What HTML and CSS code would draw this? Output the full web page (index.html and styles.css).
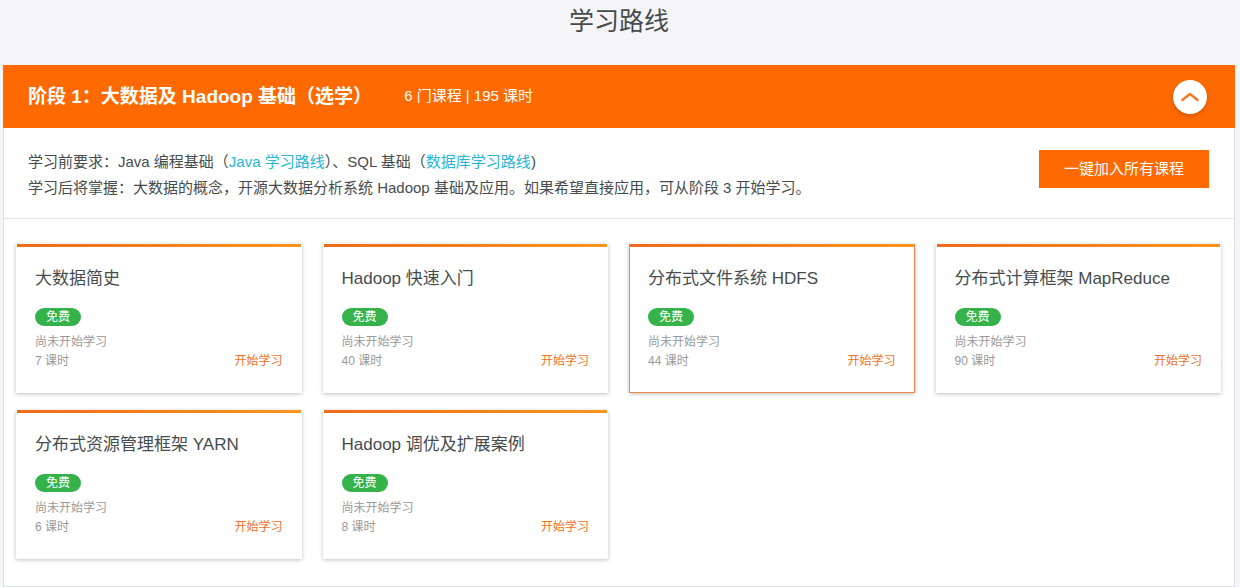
FILE: index.html
```html
<!DOCTYPE html>
<html lang="zh-CN">
<head>
  <meta charset="UTF-8" />
  <meta name="viewport" content="width=device-width, initial-scale=1" />
  <title>学习路线</title>
  <link rel="stylesheet" href="styles.css">
</head>
<body>
  <h1>学习路线</h1>

  <section class="stage">
    <header class="stage-header">
      <h2>阶段 1：大数据及 Hadoop 基础（选学）</h2>
      <span class="stage-count">6 门课程 | 195 课时</span>
      <button class="btn-toggle" type="button" aria-label="收起" aria-expanded="true">
        <svg width="18" height="10" viewBox="0 0 18 10" fill="none" stroke="#ec7a26" stroke-width="2.4" stroke-linecap="round" stroke-linejoin="round"><path d="M1.4 8 L9 2 L16.6 8"/></svg>
      </button>
    </header>

    <div class="stage-intro">
      <div class="stage-text">
        <p>学习前要求：Java 编程基础（<a href="#java">Java 学习路线</a>）、SQL 基础（<a href="#database">数据库学习路线</a>)</p>
        <p>学习后将掌握：大数据的概念，开源大数据分析系统 Hadoop 基础及应用。如果希望直接应用，可从阶段 3 开始学习。</p>
      </div>
      <button class="btn-join" type="button">一键加入所有课程</button>
    </div>

    <div class="courses">
      <article class="course">
        <h3>大数据简史</h3>
        <span class="badge">免费</span>
        <p>尚未开始学习</p>
        <div class="course-foot"><span>7 课时</span><a href="#course1">开始学习</a></div>
      </article>
      <article class="course">
        <h3>Hadoop 快速入门</h3>
        <span class="badge">免费</span>
        <p>尚未开始学习</p>
        <div class="course-foot"><span>40 课时</span><a href="#course2">开始学习</a></div>
      </article>
      <article class="course active">
        <h3>分布式文件系统 HDFS</h3>
        <span class="badge">免费</span>
        <p>尚未开始学习</p>
        <div class="course-foot"><span>44 课时</span><a href="#course3">开始学习</a></div>
      </article>
      <article class="course">
        <h3>分布式计算框架 MapReduce</h3>
        <span class="badge">免费</span>
        <p>尚未开始学习</p>
        <div class="course-foot"><span>90 课时</span><a href="#course4">开始学习</a></div>
      </article>
      <article class="course">
        <h3>分布式资源管理框架 YARN</h3>
        <span class="badge">免费</span>
        <p>尚未开始学习</p>
        <div class="course-foot"><span>6 课时</span><a href="#course5">开始学习</a></div>
      </article>
      <article class="course">
        <h3>Hadoop 调优及扩展案例</h3>
        <span class="badge">免费</span>
        <p>尚未开始学习</p>
        <div class="course-foot"><span>8 课时</span><a href="#course6">开始学习</a></div>
      </article>
    </div>
  </section>
</body>
</html>
```

FILE: styles.css
```css
* {
  box-sizing: border-box;
}
body {
  margin: 0;
  padding: 0 5px 0 3px;
  background: #f5f5f8;
  color: #464c4e;
  font-family: "Liberation Sans", "Noto Sans CJK SC", sans-serif;
}
h1, h2, h3, p {
  margin: 0;
  font-weight: 400;
}
a {
  text-decoration: none;
}
a:hover {
  text-decoration: underline;
}
button {
  border: none;
  font-family: inherit;
  cursor: pointer;
}
h1 {
  padding-bottom: 23px;
  font-size: 25px;
  line-height: 42px;
  text-align: center;
}
.stage {
  background: #fff;
  border: 1px solid #dedfe3;
  border-top: none;
}
.stage-header {
  display: flex;
  align-items: center;
  margin: 0 -1px;
  padding: 15px 28px 14px 25px;
  background: #ff6a00;
  color: #fff;
}
.stage-header h2 {
  font-size: 19px;
  font-weight: 700;
  line-height: 26px;
}
.stage-count {
  margin-left: 32px;
  padding-bottom: 2px;
  font-size: 15px;
  line-height: 26px;
}
.btn-toggle {
  display: flex;
  align-items: center;
  justify-content: center;
  width: 34px;
  height: 34px;
  margin-left: auto;
  padding: 0;
  border-radius: 50%;
  background: #fff;
  box-shadow: 0 2px 5px rgba(0, 0, 0, 0.2);
}
.stage-intro {
  display: flex;
  align-items: flex-start;
  justify-content: space-between;
  gap: 20px;
  padding: 21px 25px 17px 24px;
  border-bottom: 1px solid #e2e3e6;
}
.stage-text {
  font-size: 15px;
  line-height: 26px;
}
.stage-text a {
  color: #27b5d5;
}
.btn-join {
  flex-shrink: 0;
  height: 38px;
  margin-top: 1px;
  padding: 0 25px 3px;
  background: #ff6a00;
  color: #fff;
  font-size: 15px;
}
.courses {
  display: grid;
  grid-template-columns: repeat(4, 1fr);
  gap: 17px 21px;
  padding: 25px 13px 27px 12px;
}
.course {
  border: 1px solid transparent;
  border-top: none;
  background: #fff;
  box-shadow: 0 1px 4px rgba(0, 0, 0, 0.25);
  padding: 0 18px 21px;
  color: #999;
  font-size: 12px;
  line-height: 19px;
}
.course::before {
  content: "";
  display: block;
  height: 3px;
  margin: 0 -18px 20px;
  background: linear-gradient(90deg, #ee6b1b, #f6951d);
}
.course.active {
  border-color: #e98848;
}
.course h3 {
  margin-bottom: 17px;
  color: #464c4e;
  font-size: 17px;
  line-height: 24px;
}
.badge {
  display: block;
  width: fit-content;
  margin-bottom: 7px;
  padding: 0 11px;
  border-radius: 9px;
  background: #35b34a;
  color: #fff;
  line-height: 18px;
}
.course-foot {
  display: flex;
  justify-content: space-between;
}
.course-foot a {
  color: #f07026;
}
@media (max-width: 900px) {
  .courses {
    grid-template-columns: repeat(2, 1fr);
  }
  .stage-intro {
    flex-wrap: wrap;
  }
}
```
